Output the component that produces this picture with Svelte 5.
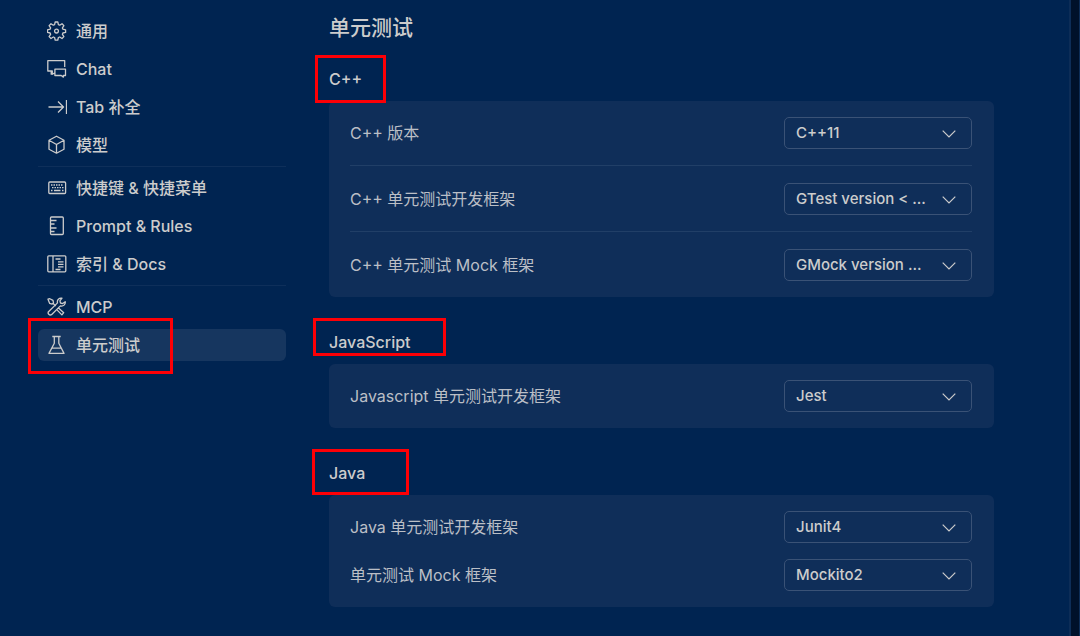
<script lang="ts">
	type NavItem = { icon: string; label: string; active?: boolean }
	type Row = { id: string; label: string; value: string }
	type Section = { title: string; mark: string; divided?: boolean; rows: Row[] }

	const groups: NavItem[][] = [
		[
			{ icon: 'gear', label: '通用' },
			{ icon: 'chat', label: 'Chat' },
			{ icon: 'tab', label: 'Tab 补全' },
			{ icon: 'cube', label: '模型' }
		],
		[
			{ icon: 'keyboard', label: '快捷键 & 快捷菜单' },
			{ icon: 'rules', label: 'Prompt & Rules' },
			{ icon: 'docs', label: '索引 & Docs' }
		],
		[
			{ icon: 'tools', label: 'MCP' },
			{ icon: 'flask', label: '单元测试', active: true }
		]
	]

	const sections: Section[] = [
		{
			title: 'C++',
			mark: 'mark-cpp',
			divided: true,
			rows: [
				{ id: 'cpp-version', label: 'C++ 版本', value: 'C++11' },
				{ id: 'cpp-test', label: 'C++ 单元测试开发框架', value: 'GTest version < ...' },
				{ id: 'cpp-mock', label: 'C++ 单元测试 Mock 框架', value: 'GMock version ...' }
			]
		},
		{
			title: 'JavaScript',
			mark: 'mark-js',
			rows: [{ id: 'js-test', label: 'Javascript 单元测试开发框架', value: 'Jest' }]
		},
		{
			title: 'Java',
			mark: 'mark-java',
			rows: [
				{ id: 'java-test', label: 'Java 单元测试开发框架', value: 'Junit4' },
				{ id: 'java-mock', label: '单元测试 Mock 框架', value: 'Mockito2' }
			]
		}
	]
</script>

{#snippet icon(name: string)}
	<svg class="icon" viewBox="0 0 20 20" aria-hidden="true">
		{#if name === 'gear'}
			<path
				d="M8.2 1h2.600l.6 2.700 1.300.5 2.300-1.500 1.900 1.900-1.500 2.300.5 1.300 2.700.6v2.600l-2.700.6-.5 1.300 1.500 2.300-1.900 1.900-2.300-1.500-1.300.5-.6 2.700H8.200l-.6-2.700-1.300-.5L4 17.500l-1.900-1.900 1.500-2.300-.5-1.300-2.600-.6V8.800l2.600-.6.5-1.300-1.500-2.300L4 2.700l2.300 1.500 1.300-.5z"
			/>
			<circle cx="9.500" cy="10.100" r="1.900" />
		{:else if name === 'chat'}
			<path d="M7.500 14l-2.200 1.300V12H.8V1.700h16.900v6.400M4.200 12v3.200h1.500M7.900 10.100h10.600v6.400h-2.100v1.600l-2.200-1.600H7.900z" />
		{:else if name === 'tab'}
			<path d="M1.500 10h15M11 4.500l5.500 5.500-5.500 5.500M19.500 3v14" />
		{:else if name === 'cube'}
			<path d="M9.500 1.200l7.500 4v9l-7.500 4-7.500-4v-9zM2 5.200l7.500 4.300L17 5.200M9.500 9.500v8.700" />
		{:else if name === 'keyboard'}
			<rect x="1.800" y="4" width="16.800" height="11.500" rx="1" />
			<path d="M4 7h12.500M5 9.700h11.500" stroke-dasharray="1.500 1" />
			<path d="M4 12.500h1.500M7 12.500h6.500M15 12.500h1.500" />
		{:else if name === 'rules'}
			<rect x="3.500" y="1" width="12.800" height="17.500" rx="1" />
			<path d="M4 4.500h5.500M4 8h3.500M4 12h5.500M4 15.500h3.500" />
		{:else if name === 'docs'}
			<rect x=".8" y="1.800" width="18" height="16" rx="1" />
			<path d="M6 2v16M8.500 5h5M11 7.800h5.500M11 10.300h5.500M11 12.800h5.500M8.500 15.500h5" />
		{:else if name === 'tools'}
			<path
				d="M1 2.200L2.800 1.700 6 3.400l.5 2.500-1.300 1.200-2.600-.8zM6.200 6.500l2.600 2.600M11.800 11.300l4.900 4.400-1.800 2.200-4.700-4.800M18.200 4.700l-2.500 1.900-2.200-.6-.6-2.200L15 1.200c-2.800-.6-5.300 1.700-4.500 4.700L1.500 14.700c-1.200 1.900 1 4.100 3 3L13.400 8.900c2.900.8 5.400-1.500 4.800-4.200z"
			/>
		{:else if name === 'flask'}
			<path d="M5.300 1.500h8.400M7.300 1.500v6.800L2 18.400h15L11.800 8.300V1.500M4.700 13.200h9.700" />
		{/if}
	</svg>
{/snippet}

<div class="page">
	<nav class="sidebar">
		{#each groups as group}
			<ul>
				{#each group as item}
					<li>
						<a href="#{item.icon}" class:active={item.active}>
							{@render icon(item.icon)}
							<span>{item.label}</span>
							{#if item.active}<i class="mark mark-nav"></i>{/if}
						</a>
					</li>
				{/each}
			</ul>
		{/each}
	</nav>

	<main>
		<h1>单元测试</h1>
		{#each sections as section}
			<section>
				<h2>{section.title}<i class="mark {section.mark}"></i></h2>
				<div class="panel" class:divided={section.divided}>
					{#each section.rows as row}
						<div class="row">
							<label for={row.id}>{row.label}</label>
							<div class="select">
								<select id={row.id}>
									<option>{row.value}</option>
								</select>
								<svg class="chevron" viewBox="0 0 14 8" aria-hidden="true">
									<path d="M.7.7L7 7l6.300-6.300" />
								</svg>
							</div>
						</div>
					{/each}
				</div>
			</section>
		{/each}
	</main>

	<div class="edge"></div>
</div>

<style>
	:global(body) {
		background: #002451;
	}

	.page {
		display: flex;
		min-height: 100vh;
		color: #ccc;
		font: 16px/24px Inter, 'Noto Sans CJK SC', sans-serif;
	}

	.sidebar {
		flex: 0 0 248px;
		padding: 15px 43px 0 38px;
	}

	ul {
		display: grid;
		gap: 6px;
		margin: 0;
		padding: 0;
		list-style: none;
	}

	ul + ul {
		margin-top: 5px;
		padding-top: 5px;
		border-top: 1px solid #0e2f5a;
	}

	.sidebar a {
		position: relative;
		display: flex;
		align-items: center;
		gap: 9px;
		height: 32px;
		padding-left: 9px;
		border-radius: 6px;
		color: inherit;
		font-weight: 500;
		text-decoration: none;
	}

	.sidebar a.active {
		background: #16365f;
	}

	.icon {
		width: 20px;
		height: 20px;
		fill: none;
		stroke: currentColor;
		stroke-width: 1.3;
		stroke-linejoin: round;
	}

	main {
		flex: 1;
		min-width: 0;
		padding: 14px 75px 27px 0;
	}

	h1 {
		margin: 0 0 25px;
		font-size: 21px;
		font-weight: 500;
		line-height: 28px;
	}

	h2 {
		position: relative;
		margin: 0 0 10px;
		font-size: 16px;
		font-weight: 500;
	}

	section + section {
		margin-top: 33px;
	}

	.panel {
		display: grid;
		gap: 16px;
		padding: 16px 22px 16px 21px;
		border-radius: 6px;
		background: #0f2e59;
	}

	.row {
		display: flex;
		align-items: center;
		justify-content: space-between;
	}

	.divided .row + .row {
		padding-top: 17px;
		border-top: 1px solid #213f67;
	}

	label {
		color: #bbbfc6;
	}

	.select {
		position: relative;
		flex: 0 0 188px;
	}

	select {
		appearance: none;
		display: block;
		box-sizing: border-box;
		width: 100%;
		height: 32px;
		padding: 0 40px 0 11px;
		border: 1px solid #3a5276;
		border-radius: 5px;
		background: transparent;
		color: inherit;
		font: inherit;
		font-size: 15px;
		font-weight: 500;
	}

	.chevron {
		position: absolute;
		top: 13px;
		right: 16px;
		width: 14px;
		height: 8px;
		fill: none;
		stroke: currentColor;
		stroke-width: 1.2;
		pointer-events: none;
	}

	.edge {
		flex: 0 0 8px;
		border-left: 2px solid #0d2d57;
		border-right: 1px solid #0d2d57;
		background: #00112a;
	}

	.mark {
		position: absolute;
		box-sizing: border-box;
		border: 3px solid #fd0006;
		pointer-events: none;
	}

	.mark-nav {
		top: -11px;
		left: -10px;
		width: 145px;
		height: 56px;
	}

	.mark-cpp {
		top: -12px;
		left: -14px;
		width: 71px;
		height: 48px;
	}

	.mark-js {
		top: -12px;
		left: -16px;
		width: 133px;
		height: 38px;
	}

	.mark-java {
		top: -12px;
		left: -17px;
		width: 97px;
		height: 46px;
	}
</style>
